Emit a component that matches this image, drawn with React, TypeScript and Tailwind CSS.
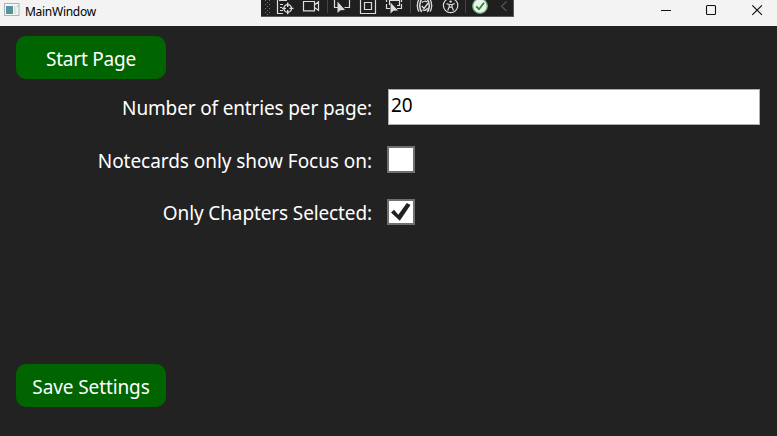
import React from 'react';

function Slot({ children, className = 'w-[26px]' }: { children?: React.ReactNode; className?: string }) {
  return (
    <svg className={`h-4 shrink-0 ${className}`} fill="none" stroke="#dcdcdc" strokeWidth="1.2">
      {children}
    </svg>
  );
}

function DebugToolbar() {
  return (
    <div className="flex h-[17px] w-[253px] shrink-0 overflow-hidden border-r border-b border-[#5a5a5a] bg-[#1f1f1f]">
      <Slot className="w-[11px]">
        <g stroke="#777" strokeWidth="1" strokeDasharray="1 3">
          <path d="M4.5 0V15M8.5 0V15" />
          <path d="M6.5 2V15" />
        </g>
      </Slot>
      <Slot>
        <path d="M5.5 0V13.5H11M7 .5H15M8 4.5H11M8 7.5H10M8 10.5H11" />
        <circle cx="15.7" cy="8.4" r="3.8" strokeWidth="1.4" />
        <path d="M15.7 2.5V7M15.7 10V14.3M10 8.4H14M17.4 8.4H21.5" strokeWidth="1.4" />
      </Slot>
      <Slot>
        <path d="M5.5 1.5H16.5V10.8H5.5ZM16.5 5L20.5 1.8V10.4L16.5 7.5" />
      </Slot>
      <Slot className="w-[5px]">
        <path d="M3.5 0V13" stroke="#444" strokeWidth="1" />
      </Slot>
      <Slot>
        <path d="M5.5 0V7.5H9M20.5 0V7.5H15.5" />
        <path d="M8.5 1.5V13L11.5 10.2L16 10Z" fill="#dcdcdc" stroke="none" />
      </Slot>
      <Slot>
        <path d="M5.5 -1V13.5H20.5V-1M9.5 2.5H16.5V9.5H9.5Z" />
      </Slot>
      <Slot>
        <path d="M5.5 4V8.5H9M20.5 4V8.5H16M8.5 5V.5H18.5V5.5H16M5.5 0V2M20.5 0V2" />
        <path d="M9.5 2.5V13.5L12.4 10.8L17 10.4Z" fill="#dcdcdc" stroke="none" />
      </Slot>
      <Slot className="w-[5px]">
        <path d="M3.5 0V13" stroke="#444" strokeWidth="1" />
      </Slot>
      <Slot>
        <path d="M9.6 0C7.6 1.5 8.6 3.5 7.6 5.8C8.6 8 7.6 10.5 9.8 11.8M15.4 0C17.4 1.5 16.4 3.5 17.4 5.8C16.4 8 17.4 10.5 15.2 11.8" strokeWidth="1.6" />
        <path d="M9.8 6L12 8.4L16 3.2M10 2.6C11.5 1 13.8 1 15 2M10.5 9.8C12 11 14.5 10.4 15.5 8" strokeWidth="1.4" />
        <path d="M6.8 0C5 2 6 4 5.2 5.8C6 7.6 5 9.6 7 11.4M18.2 0C20 2 19 4 19.8 5.8C19 7.6 20 9.6 18 11.4" strokeWidth="1.3" />
      </Slot>
      <Slot>
        <circle cx="12.6" cy="5.5" r="7.2" />
        <circle cx="12.6" cy="1.6" r="1.2" fill="#dcdcdc" stroke="none" />
        <path d="M8.5 3.6L11 4.5H14.2L16.7 3.6M11.2 4.5V7L9.7 10.5M14 4.5V7L15.5 10.5M11.2 7.2H14" />
      </Slot>
      <Slot className="w-[3px]">
        <path d="M1.5 0V13" stroke="#444" strokeWidth="1" />
      </Slot>
      <Slot>
        <circle cx="13" cy="6" r="7.3" fill="#e9f3e9" stroke="#6caf72" strokeWidth="1.3" />
        <path d="M9.2 6.3L12 9.2L17 2.8" stroke="#26833a" strokeWidth="1.8" />
      </Slot>
      <Slot className="w-[19px]">
        <path d="M13.5 1.5L8.5 6.3L13.5 11" stroke="#555" />
      </Slot>
    </div>
  );
}

function TitleBar() {
  return (
    <header className="flex h-[26px] items-start bg-[#f3f3f3]">
      <div className="flex h-[22px] w-[261px] items-center">
        <svg className="-mt-[3px] ml-1 h-[13px] w-4" viewBox="0 0 16 13">
          <defs>
            <linearGradient id="pane" x1="0" y1="0" x2="1" y2="1">
              <stop offset="0" stopColor="#5f8fba" />
              <stop offset="1" stopColor="#4c9a78" />
            </linearGradient>
          </defs>
          <rect x=".5" y=".5" width="14.5" height="12" fill="#f5f7f8" stroke="#a9b2b7" />
          <rect x="2" y="3" width="7" height="8" fill="url(#pane)" />
          <rect x="10" y="3" width="2.5" height="8" fill="#dbe4e4" />
          <path d="M13 3H14" stroke="#6fa394" />
        </svg>
        <span className="ml-[5px] pt-px text-[12px] leading-[22px] tracking-[-0.28px] text-black">MainWindow</span>
      </div>
      <DebugToolbar />
      <svg className="ml-auto h-5 w-[134px]" fill="none" stroke="#111" strokeWidth="1">
        <path d="M18 10.5H28" />
        <rect x="63.5" y="5.5" width="9" height="9" rx="1" strokeWidth="1.1" />
        <path d="M109.3 5.3L118.9 14.9M118.9 5.3L109.3 14.9" strokeWidth="1.2" />
      </svg>
    </header>
  );
}

function Label({ children, className }: { children: React.ReactNode; className: string }) {
  return <span className={`w-[372px] text-right whitespace-nowrap text-white ${className}`}>{children}</span>;
}

export default function App() {
  return (
    <div className="flex h-[436px] w-[777px] flex-col overflow-hidden bg-[#222222] font-['Noto_Sans',sans-serif]">
      <TitleBar />
      <main className="flex flex-1 flex-col text-[19px]">
        <button className="mt-[10px] ml-4 h-[43px] w-[150px] rounded-[10px] bg-[#006400] pt-[3px] text-white tracking-[-0.2px]">
          Start Page
        </button>
        <div className="mt-[10px] flex h-9">
          <Label className="pt-px leading-9 tracking-[-0.15px]">Number of entries per page:</Label>
          <input
            aria-label="Number of entries per page"
            className="ml-4 h-9 w-[372px] border border-[#abadb3] bg-white px-[2px] pb-[5px] text-[19px] text-black outline-none tracking-[0px]"
            defaultValue="20"
          />
        </div>
        <div className="mt-[21px] flex h-[27px]">
          <Label className="pt-[2px] leading-[27px] tracking-[-0.05px]">Notecards only show Focus on:</Label>
          <span className="ml-[15px] h-[27px] w-7 border-2 border-[#707070] bg-white" />
        </div>
        <div className="mt-[26px] flex h-[26px]">
          <Label className="pt-px leading-[26px] tracking-[-0.12px]">Only Chapters Selected:</Label>
          <span className="ml-[15px] h-[26px] w-7 border-2 border-[#707070] bg-white">
            <svg className="h-[22px] w-6" viewBox="0 0 24 22">
              <path d="M2 11.5L5 8.8L9.3 13.7L17.8 2L21.5 4L10.8 19.8Z" fill="#212121" />
            </svg>
          </span>
        </div>
        <button className="mt-auto mb-[29px] ml-4 h-[43px] w-[150px] rounded-[10px] bg-[#006400] pt-[3px] text-white tracking-[-0.1px]">
          Save Settings
        </button>
      </main>
    </div>
  );
}
